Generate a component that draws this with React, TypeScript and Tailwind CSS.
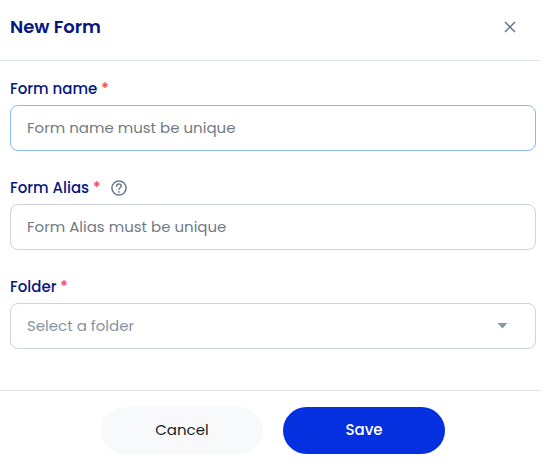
import type { ReactNode } from "react";

interface FieldProps {
  id: string;
  label: string;
  hint?: ReactNode;
  children: ReactNode;
}

function Field({ id, label, hint, children }: FieldProps) {
  return (
    <div>
      <div className="flex h-6 items-center text-[15px] font-medium text-[#06167f]">
        <label htmlFor={id}>
          {label} <span className="text-[#f5465c]">*</span>
        </label>
        {hint}
      </div>
      <div className="relative mt-1">{children}</div>
    </div>
  );
}

function HelpIcon() {
  return (
    <svg
      className="ml-2.5 size-4"
      viewBox="0 0 16 16"
      fill="none"
      stroke="#6b7b8d"
      strokeWidth="1.5"
      strokeLinecap="round"
      aria-hidden="true"
    >
      <circle cx="8" cy="8" r="7.1" />
      <path d="M5.7 6.2c0-1.3 1-2.1 2.3-2.1s2.3.8 2.3 2c0 1.6-2.3 1.7-2.3 3.2" />
      <path d="M8 11.8v.1" strokeWidth="1.7" />
    </svg>
  );
}

export default function App() {
  return (
    <form className="mr-px bg-white font-['Poppins','Inter',sans-serif]">
      <header className="mr-1.5 flex h-[61px] items-center justify-between border-b border-[#dfe2e8] pr-6 pb-1.5 pl-2.5">
        <h1 className="text-lg font-semibold text-[#06167f]">New Form</h1>
        <button type="button" aria-label="Close" className="p-0">
          <svg className="size-3" viewBox="0 0 12 12" fill="none" stroke="#65758a" strokeWidth="1.5" aria-hidden="true">
            <path d="M1 1l10 10M11 1L1 11" />
          </svg>
        </button>
      </header>

      <div className="flex flex-col gap-[25px] px-2.5 pt-4 pb-[41px]">
        <Field id="form-name" label="Form name">
          <input
            id="form-name"
            type="text"
            placeholder="Form name must be unique"
            className="block h-[46px] w-full rounded-lg border border-[#8bb8fb] px-4 pb-0.5 text-[15px] text-[#212529] outline-none placeholder:text-[#727b84]"
          />
        </Field>

        <Field id="form-alias" label="Form Alias" hint={<HelpIcon />}>
          <input
            id="form-alias"
            type="text"
            placeholder="Form Alias must be unique"
            className="block h-[46px] w-full rounded-lg border border-[#ced3dc] px-4 pb-0.5 text-[15px] text-[#212529] outline-none placeholder:text-[#727b84]"
          />
        </Field>

        <Field id="folder" label="Folder">
          <select
            id="folder"
            defaultValue=""
            className="block h-[46px] w-full appearance-none rounded-lg border border-[#ced3dc] px-4 text-[15px] text-[#8793a0] outline-none"
          >
            <option value="">Select a folder</option>
          </select>
          <svg
            className="pointer-events-none absolute top-5 right-7 h-[6px] w-[11px]"
            viewBox="0 0 11 6"
            fill="#8996a4"
            aria-hidden="true"
          >
            <path d="M.5 0h10L5.5 5.6z" />
          </svg>
        </Field>
      </div>

      <hr className="mr-1.5 border-[#dfe2e8]" />
      <footer className="flex justify-center gap-5 px-2.5 py-4">
        <button type="button" className="h-[47px] w-[162px] rounded-full bg-[#f8f9fb] text-[15px] text-[#181c25]">
          Cancel
        </button>
        <button type="submit" className="h-[47px] w-[162px] rounded-full bg-[#0430e0] text-[15px] font-medium text-white">
          Save
        </button>
      </footer>
    </form>
  );
}
